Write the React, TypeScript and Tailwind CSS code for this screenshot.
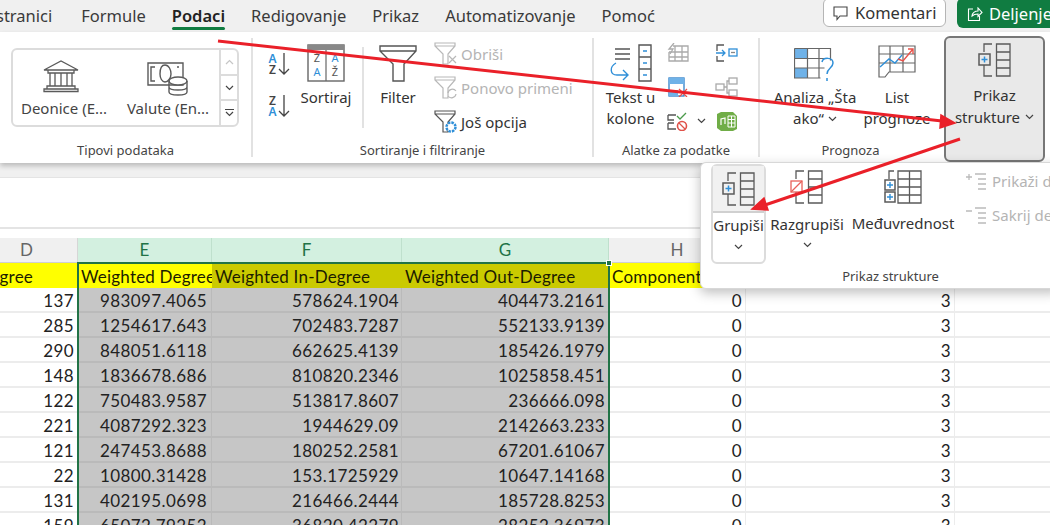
import React from 'react';

const UI_FONT = { fontFamily: '"Noto Sans", sans-serif' };

const tabs = ['Formule', 'Podaci', 'Redigovanje', 'Prikaz', 'Automatizovanje', 'Pomoć'];

const rows = [
  ['137', '983097.4065', '578624.1904', '404473.2161'],
  ['285', '1254617.643', '702483.7287', '552133.9139'],
  ['290', '848051.6118', '662625.4139', '185426.1979'],
  ['148', '1836678.686', '810820.2346', '1025858.451'],
  ['122', '750483.9587', '513817.8607', '236666.098'],
  ['221', '4087292.323', '1944629.09', '2142663.233'],
  ['121', '247453.8688', '180252.2581', '67201.61067'],
  ['22', '10800.31428', '153.1725929', '10647.14168'],
  ['131', '402195.0698', '216466.2444', '185728.8253'],
  ['159', '65072.79252', '36820.42279', '28252.36973'],
];

const Chevron = ({ className = '' }: { className?: string }) => (
  <svg width="9" height="6" viewBox="0 0 9 6" className={className} fill="none" stroke="#444" strokeWidth="1.2">
    <path d="M1 1l3.5 3.5L8 1" />
  </svg>
);

const Bank = () => (
  <svg width="38" height="34" viewBox="0 0 38 34" fill="none" stroke="#5a5a5a" strokeWidth="1.3">
    <path d="M2 11L19 2l17 9zM6 11v3h26v-3M8 14v13M13 14v13M19 14v13M25 14v13M30 14v13M5 27h28v3H5zM2 30h34v2.5H2z" />
  </svg>
);

const Money = () => (
  <svg width="42" height="34" viewBox="0 0 42 34" fill="none" stroke="#5a5a5a" strokeWidth="1.4">
    <path d="M1 1h35v22H1zM8 5H4v14h4M32 5h-2M18 3c-4 0-5 5-5 9s2 8 5 8 6-4 6-8-2-9-6-9z" />
    <ellipse cx="31" cy="19" rx="9" ry="4" fill="#fff" />
    <path d="M22 19v11c0 2 4 3 9 3s9-1 9-3V19M22 25c0 2 4 3 9 3s9-1 9-3" fill="none" />
  </svg>
);

const SortIcon = ({ top, bottom }: { top: string; bottom: string }) => (
  <svg width="23" height="24" viewBox="0 0 23 24" fill="none">
    <text x="5.500" y="11" fontSize="12" fontWeight="600" textAnchor="middle" fontFamily="Noto Sans" fill={top === 'A' ? '#2f8fd8' : '#444'}>{top}</text>
    <text x="5.500" y="22" fontSize="12" fontWeight="600" textAnchor="middle" fontFamily="Noto Sans" fill={bottom === 'A' ? '#2f8fd8' : '#444'}>{bottom}</text>
    <path d="M17 1v21M12 17l5 5 5-5" stroke="#444" strokeWidth="1.300" />
  </svg>
);

const SortBig = () => (
  <svg width="38" height="38" viewBox="0 0 38 38" fill="none">
    <rect x="1" y="1" width="36" height="36" stroke="#666" strokeWidth="1.4" />
    <rect x="1" y="1" width="36" height="5" fill="#888" />
    <path d="M19 6v31" stroke="#666" strokeWidth="1.2" />
    <text x="10" y="18" fontSize="11" textAnchor="middle" fill="#555" fontFamily="Noto Sans">Ž</text>
    <text x="10" y="32" fontSize="11" textAnchor="middle" fill="#2f8fd8" fontFamily="Noto Sans">A</text>
    <text x="28" y="18" fontSize="11" textAnchor="middle" fill="#2f8fd8" fontFamily="Noto Sans">A</text>
    <text x="28" y="32" fontSize="11" textAnchor="middle" fill="#555" fontFamily="Noto Sans">Ž</text>
  </svg>
);

const Funnel = () => (
  <svg width="38" height="38" viewBox="0 0 38 38" fill="none" stroke="#555" strokeWidth="1.4">
    <path d="M1 2h36v5L25 20v17H14V20L1 7zM1 7h36" />
  </svg>
);

const SmallFunnel = ({ color, kind }: { color: string; kind: 'x' | 'redo' | 'gear' }) => (
  <svg width="24" height="24" viewBox="0 0 24 24" fill="none" stroke={color} strokeWidth="1.2">
    <path d="M1 1h20v3l-7 8v10H9V12L1 4zM1 4h20" />
    {kind === 'x' && <path d="M15 14l7 7M22 14l-7 7" />}
    {kind === 'redo' && <path d="M14 17a4.500 4.500 0 0 1 8-2M22 18a4.500 4.500 0 0 1-8 2" />}
    {kind === 'gear' && <circle cx="17" cy="17" r="4.500" stroke="#2f8fd8" strokeWidth="2.500" strokeDasharray="2.500 1" fill="#fff" />}
  </svg>
);

const TextToCols = () => (
  <svg width="44" height="38" viewBox="0 0 44 38" fill="none">
    <path d="M6 5h15M6 10h15M6 15h15" stroke="#555" strokeWidth="1.3" />
    <path d="M30 1h12v36H30zM30 13h12M30 25h12" stroke="#555" strokeWidth="1.4" />
    <path d="M34 7h4M34 19h4M34 31h4" stroke="#2f8fd8" strokeWidth="1.4" />
    <path d="M7 19c-7 4-6 12 1 12h10M14 26l5 5-5 5" stroke="#2f8fd8" strokeWidth="1.4" />
  </svg>
);

const WhatIf = () => (
  <svg width="42" height="38" viewBox="0 0 42 38" fill="none">
    <rect x="0.500" y="0.500" width="13" height="10" fill="#6fb2e8" />
    <rect x="0.500" y="20" width="13" height="10" fill="#6fb2e8" />
    <path d="M0.500 0.500h36v12M0.500 0.500v29.500h26M0.500 10.500h36M0.500 20h30M13.500 0.500v29.500M25 0.500v29.500" stroke="#666" strokeWidth="1.200" />
    <path d="M28 14c1-5 11-5 11 1 0 5-6 5-6 11M33 30v3" stroke="#2f8fd8" strokeWidth="1.500" />
  </svg>
);

const Forecast = () => (
  <svg width="38" height="34" viewBox="0 0 38 34" fill="none">
    <path d="M1 1h36v26H11l-4 5H1zM1 9h36M1 18h36M12 1v26M25 1v26" stroke="#666" strokeWidth="1.200" />
    <path d="M2 22l9-8 6 4 7-8" stroke="#2f8fd8" strokeWidth="1.400" />
    <path d="M20 14l5 2 10-12M30 4h5v5" stroke="#e8524a" strokeWidth="1.400" />
  </svg>
);

const Outline = ({ variant }: { variant: 'plus' | 'red' }) => (
  <svg width="34" height="34" viewBox="0 0 34 34" fill="none" stroke="#5a5a5a" strokeWidth="1.300">
    <path d="M18.500 1h13.500v32H18.500zM18.500 9h13.500M18.500 17h13.500M18.500 25h13.500" />
    <path d="M14 1H6v8M6 22v11h8" />
    {variant === 'plus' ? (
      <>
        <rect x="1" y="11" width="11" height="11" strokeWidth="1.500" />
        <path d="M6.500 13.500v6M3.500 16.500h6" stroke="#2f8fd8" strokeWidth="1.500" />
      </>
    ) : (
      <>
        <rect x="1" y="11" width="11" height="11" stroke="#e8605a" strokeWidth="1.300" />
        <path d="M1 22l11-11" stroke="#e8605a" strokeWidth="1.300" />
      </>
    )}
  </svg>
);

const Subtotal = () => (
  <svg width="38" height="34" viewBox="0 0 38 34" fill="none" stroke="#5a5a5a" strokeWidth="1.300">
    <path d="M14 1h23v32H14zM14 9h23M14 17h23M14 25h23M25.500 1v32M10 1H5v8" />
    <rect x="1" y="10" width="10" height="10" strokeWidth="1.500" />
    <rect x="1" y="22" width="10" height="10" strokeWidth="1.500" />
    <path d="M6 12v6M3 15h6M6 24v6M3 27h6" stroke="#2f8fd8" strokeWidth="1.400" />
  </svg>
);

const Tiny = ({ children }: { children: React.ReactNode }) => (
  <svg width="23" height="20" viewBox="0 0 23 20" fill="none" strokeWidth="1.300">
    {children}
  </svg>
);

const GroupLabel = ({ children }: { children: React.ReactNode }) => (
  <div className="h-[12px] flex items-center justify-center text-[13px] text-[#444] whitespace-nowrap shrink-0">{children}</div>
);

const LargeButton = ({ icon, lines, width }: { icon: React.ReactNode; lines: React.ReactNode[]; width: number }) => (
  <div className="flex flex-col items-center shrink-0 text-[15px] leading-[21px] text-[#333]" style={{ width }}>
    <div className="flex items-start justify-center h-[43px]">{icon}</div>
    {lines.map((l, i) => (
      <div key={i} className="whitespace-nowrap flex items-center gap-[4px]">{l}</div>
    ))}
  </div>
);

const Ribbon = () => (
  <div className="h-[131px] bg-white flex shadow-[0_3px_5px_rgba(0,0,0,0.22)] relative" style={UI_FONT}>
    {/* Tipovi podataka */}
    <div className="w-[253px] flex flex-col border-r-2 border-[#e2e2e2] my-[6px] shrink-0">
      <div className="flex-1 pl-[11px] pt-[10px]">
        <div className="w-[228px] h-[79px] rounded-[6px] border-2 border-[#dcdcdc] flex text-[15px] text-[#444]">
          <div className="w-[104px] flex flex-col items-center pt-[9px] -ml-[4px] mr-[4px]">
            <Bank />
            <span className="mt-[4px] ml-[6px] whitespace-nowrap">Deonice (E...</span>
          </div>
          <div className="w-[102px] flex flex-col items-center pt-[12px]">
            <Money />
            <span className="mt-[1px] whitespace-nowrap">Valute (En...</span>
          </div>
          <div className="flex-1 flex flex-col border-l-2 border-[#dcdcdc] items-center justify-center">
            <div className="h-[26px] w-full flex items-center justify-center border-b-2 border-[#dcdcdc]">
              <Chevron className="rotate-180 opacity-30" />
            </div>
            <div className="h-[25px] w-full flex items-center justify-center border-b-2 border-[#dcdcdc]">
              <Chevron />
            </div>
            <div className="flex-1 w-full flex flex-col items-center justify-center">
              <div className="w-[9px] h-px bg-[#444] mb-[1px]" />
              <Chevron />
            </div>
          </div>
        </div>
      </div>
      <GroupLabel>Tipovi podataka</GroupLabel>
    </div>

    {/* Sortiranje i filtriranje */}
    <div className="w-[341px] flex flex-col border-r-2 border-[#e2e2e2] my-[6px] shrink-0">
      <div className="flex-1 flex pt-[6px]">
        <div className="w-[51px] flex flex-col items-center pt-[8px] gap-[18px] shrink-0">
          <SortIcon top="A" bottom="Z" />
          <SortIcon top="Z" bottom="A" />
        </div>
        <LargeButton icon={<SortBig />} lines={['Sortiraj']} width={44} />
        <div className="w-[2px] h-[81px] bg-[#e2e2e2] ml-[14px] mt-[3px] shrink-0" />
        <LargeButton icon={<Funnel />} lines={['Filter']} width={68} />
        <div className="flex flex-col text-[15px] leading-[20px] ml-[2px] -mt-[7px] shrink-0">
          <div className="flex items-center gap-[3px] h-[34px] text-[#b4b4b4]"><SmallFunnel color="#b8b8b8" kind="x" />Obriši</div>
          <div className="flex items-center gap-[3px] h-[34px] text-[#b4b4b4]"><SmallFunnel color="#b8b8b8" kind="redo" />Ponovo primeni</div>
          <div className="flex items-center gap-[3px] h-[34px] text-[#333]"><SmallFunnel color="#555" kind="gear" />Još opcija</div>
        </div>
      </div>
      <GroupLabel>Sortiranje i filtriranje</GroupLabel>
    </div>

    {/* Alatke za podatke */}
    <div className="w-[166px] flex flex-col border-r-2 border-[#e2e2e2] my-[6px] shrink-0">
      <div className="flex-1 flex pt-[6px]">
        <div className="w-[73px] shrink-0"><LargeButton icon={<TextToCols />} lines={['Tekst u', 'kolone']} width={73} /></div>
        <div className="flex flex-col gap-[14px] -ml-[1px] -mt-[1px] shrink-0">
          <Tiny><path d="M7 3h15v15H3V9M3 9h19M3 14h19M9 3v15M16 3v15" stroke="#aaa" /><path d="M8 0L3 6h4l-3 5" stroke="#aaa" /></Tiny>
          <Tiny><rect x="3" y="1" width="15" height="18" stroke="#2f7fc8" /><rect x="3" y="1" width="15" height="6" fill="#6fb2e8" /><rect x="3" y="13" width="9" height="6" fill="#6fb2e8" /><path d="M13 12l8 8M21 12l-8 8" stroke="#e8524a" /></Tiny>
          <div className="flex items-center gap-[8px]">
            <Tiny><path d="M2 4h8M2 4v5h6M2 12v6h8M2 12h6" stroke="#555" /><path d="M11 5l3 3 6-6" stroke="#4a9a4a" /><circle cx="16" cy="15" r="4.500" stroke="#e0524a" strokeWidth="1.600" /><path d="M13 12l6 6" stroke="#e0524a" /></Tiny>
            <Chevron />
          </div>
        </div>
        <div className="flex flex-col gap-[14px] ml-[9px] shrink-0 -mt-[1px]">
          <Tiny><path d="M9 2H2v6M2 13v5h7" stroke="#555" /><path d="M1 10h9M7 7l3 3-3 3" stroke="#2f8fd8" /><rect x="14" y="6" width="8" height="7" stroke="#2f8fd8" /><path d="M16 9.500h4" stroke="#888" /></Tiny>
          <Tiny><rect x="1" y="7" width="8" height="6" stroke="#aaa" /><rect x="14" y="1" width="8" height="6" stroke="#aaa" /><rect x="14" y="13" width="8" height="6" stroke="#aaa" /><path d="M9 10h3V4h2M12 10v6h2" stroke="#aaa" /></Tiny>
          <Tiny><path d="M6 1h12l4 4v13l-4 2H6l-4-3V3z" fill="#70ad47" /><path d="M13 5h7v11h-7zM13 8.500h7M13 12h7M16.500 5v11" stroke="#fff" strokeWidth="1" /><path d="M6 14V8l4-1v6" stroke="#fff" strokeWidth="1.200" /></Tiny>
        </div>
      </div>
      <GroupLabel>Alatke za podatke</GroupLabel>
    </div>

    {/* Prognoza */}
    <div className="w-[184px] flex flex-col my-[6px] shrink-0">
      <div className="flex-1 flex pt-[6px] pl-[13px]">
        <LargeButton icon={<div className="pt-[4px]"><WhatIf /></div>} lines={['Analiza „Šta', <>ako“ <Chevron /></>]} width={84} />
        <div className="w-[6px] shrink-0" />
        <LargeButton icon={<div className="pt-[1px]"><Forecast /></div>} lines={['List', 'prognoze']} width={68} />
      </div>
      <GroupLabel><span className="-ml-[3px]">Prognoza</span></GroupLabel>
    </div>

    {/* Prikaz strukture, selected */}
    <div className="w-[101px] h-[126px] mt-[4px] rounded-[6px] border-2 border-[#777] bg-[#e9e9e9] flex flex-col items-center pt-[5px] text-[15px] leading-[22px] text-[#333] shrink-0">
      <Outline variant="plus" />
      <div className="mt-[7px]">Prikaz</div>
      <div className="flex items-center gap-[5px] whitespace-nowrap">strukture <Chevron /></div>
    </div>
  </div>
);

const OutlinePopup = () => (
  <div
    className="absolute left-[700px] top-[162px] w-[360px] h-[127px] bg-white rounded-[6px] border border-[#d8d8d8] shadow-[0_4px_12px_rgba(0,0,0,0.25)] flex flex-col text-[15px] text-[#333]"
    style={UI_FONT}
  >
    <div className="flex-1 flex pl-[10px] pt-[1px]">
      <div className="w-[55px] h-[100px] rounded-[6px] border-2 border-[#dcdcdc] flex flex-col items-center shrink-0">
        <div className="w-full h-[47px] bg-[#f1f1f1] border-b-2 border-[#d0d0d0] flex items-center justify-center">
          <Outline variant="plus" />
        </div>
        <div className="mt-[1px] leading-[22px]">Grupiši</div>
        <Chevron className="mt-[8px]" />
      </div>
      <div className="w-[76px] ml-[3px] flex flex-col items-center pt-[6px] shrink-0">
        <Outline variant="red" />
        <div className="mt-[9px] leading-[22px]">Razgrupiši</div>
        <Chevron className="mt-[7px]" />
      </div>
      <div className="w-[110px] ml-[3px] flex flex-col items-center pt-[6px] shrink-0">
        <Subtotal />
        <div className="mt-[8px] leading-[22px]">Međuvrednost</div>
      </div>
      <div className="flex flex-col ml-[7px] pt-[6px] gap-[12px] text-[#b4b4b4] whitespace-nowrap shrink-0">
        <div className="flex items-center gap-[4px] h-[22px]">
          <Tiny><path d="M1 6h6M4 3v6M10 3h11M13 8h8M13 13h8M13 18h8" stroke="#bbb" /></Tiny>Prikaži detalje
        </div>
        <div className="flex items-center gap-[4px] h-[22px]">
          <Tiny><path d="M1 6h6M10 3h11M13 8h8M13 13h8M13 18h8" stroke="#bbb" /></Tiny>Sakrij detalje
        </div>
      </div>
    </div>
    <div className="h-[23px] w-[350px] flex items-center justify-center text-[13px] text-[#444]">
      <span className="ml-[29px]">Prikaz strukture</span>
    </div>
  </div>
);

const COLS = [78, 134, 190, 207, 137, 209, 95];

const ColHeader = ({ label, w, on, pr }: { label: string; w: number; on: boolean; pr: number }) => (
  <div
    className={`h-full flex items-center justify-center text-[17px] border-r shrink-0 ${on ? 'bg-[#d3f0e0] text-[#217346] border-[#bfe0cd]' : 'bg-[#f0f0f0] text-[#666] border-[#d6d6d6]'}`}
    style={{ width: w, paddingRight: pr }}
  >
    {label}
  </div>
);

const Sheet = () => (
  <div className="flex-1 overflow-hidden relative" style={{ fontFamily: 'Lato, sans-serif' }}>
    <div className="flex h-[25px] border-b border-[#cfcfcf]">
      {['D', 'E', 'F', 'G', 'H', '', ''].map((c, i) => (
        <ColHeader key={i} label={c} w={COLS[i]} on={i >= 1 && i <= 3} pr={i === 0 ? 24 : 0} />
      ))}
    </div>
    <div className="flex h-[25px] text-[17px] text-[#1c1c00] tracking-[0.2px]">
      <div className="w-[78px] bg-[#ffff00] flex justify-end pr-[45px] pt-[2px] overflow-hidden shrink-0 items-center">Degree</div>
      <div className="w-[134px] bg-[#ffff00] pl-[3px] pt-[2px] overflow-hidden whitespace-nowrap shrink-0 flex items-center">Weighted Degree</div>
      <div className="w-[190px] bg-[#caca00] pl-[3px] pt-[2px] overflow-hidden whitespace-nowrap shrink-0 flex items-center">Weighted In-Degree</div>
      <div className="w-[207px] bg-[#caca00] pl-[3px] pt-[2px] overflow-hidden whitespace-nowrap shrink-0 flex items-center">Weighted Out-Degree</div>
      <div className="w-[137px] bg-[#ffff00] pl-[3px] pt-[2px] overflow-hidden whitespace-nowrap shrink-0 flex items-center">Component</div>
    </div>
    {rows.map((r) => (
      <div key={r[1]} className="flex h-[25px] text-[17px] text-[#222] tracking-[0.4px]">
        <div className="w-[78px] pr-[4px] pt-[3px] flex items-center justify-end border-b-2 border-[#ececec] shrink-0">{r[0]}</div>
        <div className="w-[134px] pr-[4px] pt-[3px] flex items-center justify-end bg-[#c6c6c6] border-b-2 border-r border-[#bababa] shrink-0">{r[1]}</div>
        <div className="w-[190px] pr-[2px] pt-[3px] flex items-center justify-end bg-[#c6c6c6] border-b-2 border-r border-[#bababa] shrink-0">{r[2]}</div>
        <div className="w-[207px] pr-[4px] pt-[3px] flex items-center justify-end bg-[#c6c6c6] border-b-2 border-[#bababa] shrink-0">{r[3]}</div>
        <div className="w-[137px] pr-[3px] pt-[3px] flex items-center justify-end border-b-2 border-r border-[#ececec] shrink-0">0</div>
        <div className="w-[209px] pr-[3px] pt-[3px] flex items-center justify-end border-b-2 border-r border-[#ececec] shrink-0">3</div>
        <div className="w-[95px] border-b-2 border-[#ececec] shrink-0" />
      </div>
    ))}
    {/* selection frame */}
    <div className="absolute left-[77px] top-[24px] w-[533px] h-[300px] border-2 border-[#217346] pointer-events-none" />
    <div className="absolute left-[606px] top-[22px] w-[6px] h-[6px] bg-[#217346] border border-white" />
  </div>
);

const Arrows = () => (
  <svg className="absolute left-0 top-0 pointer-events-none" width="1050" height="525" viewBox="0 0 1050 525" fill="none">
    <path d="M218 41L942 121" stroke="#ea2029" strokeWidth="3" />
    <path d="M955 123L940 128L941 115Z" fill="#ea2029" stroke="#ea2029" strokeWidth="1.500" />
    <path d="M960 139L765 205" stroke="#ea2029" strokeWidth="3" />
    <path d="M752 209L764 198L768 210Z" fill="#ea2029" stroke="#ea2029" strokeWidth="1.500" />
  </svg>
);

export default function App() {
  return (
    <div className="relative w-[1050px] h-[525px] overflow-hidden bg-white flex flex-col">
      <div className="h-[32px] bg-[#f0f0f0] flex items-start shrink-0 text-[16.500px] text-[#3a3a3a] relative" style={UI_FONT}>
        <div className="flex gap-[26px] -ml-[4px] pt-[2px] h-[30px] items-center">
          <span className="mr-[3px]">stranici</span>
          {tabs.map((t) => (
            <div key={t} className={`relative h-full flex items-center ${t === 'Podaci' ? 'font-semibold text-[#222]' : ''}`}>
              {t}
              {t === 'Podaci' && <div className="absolute left-0 right-0 bottom-0 h-[3px] rounded bg-[#107c41]" />}
            </div>
          ))}
        </div>
        <div className="ml-auto flex items-start -mt-[2px] gap-[11px] -mr-[30px]">
          <div className="w-[123px] h-[29px] bg-white border border-[#b5b5b5] rounded-[6px] flex items-center gap-[7px] pl-[9px] pt-[2px] text-[#333]">
            <svg width="15" height="15" viewBox="0 0 15 15" fill="none" stroke="#444" strokeWidth="1.100"><path d="M1 1h13v9H7l-3 3.500V10H1z" /></svg>
            Komentari
          </div>
          <div className="w-[123px] h-[30px] bg-[#107c41] rounded-[6px] flex items-center gap-[6px] pl-[10px] pt-[2px] text-white">
            <svg width="16" height="15" viewBox="0 0 16 15" fill="none" stroke="#fff" strokeWidth="1.100"><path d="M6 2H1.500v11.500h11V9M5 9c0-3 3-5 6-5V1l4 4.500-4 4V7c-3 0-5 1-6 2z" /></svg>
            Deljenje
          </div>
        </div>
      </div>
      <Ribbon />
      <div className="h-[14px] bg-[#f0f0f0] shrink-0" />
      <div className="h-[52px] bg-white border-b-2 border-t border-[#e4e4e4] shrink-0" />
      <div className="h-[9px] bg-white shrink-0" />
      <Sheet />
      <OutlinePopup />
      <Arrows />
    </div>
  );
}
